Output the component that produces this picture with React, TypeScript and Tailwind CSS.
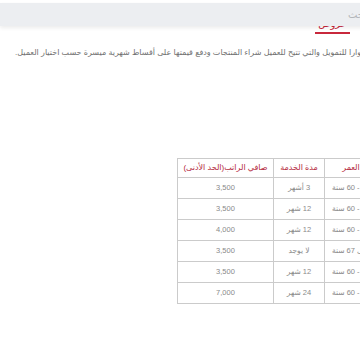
const rows = [
  { age: '21 - 60 سنة', service: '3 أشهر', salary: '3,500' },
  { age: '21 - 60 سنة', service: '12 شهر', salary: '3,500' },
  { age: '21 - 60 سنة', service: '12 شهر', salary: '4,000' },
  { age: 'حتى 67 سنة', service: 'لا يوجد', salary: '3,500' },
  { age: '21 - 60 سنة', service: '12 شهر', salary: '3,500' },
  { age: '21 - 60 سنة', service: '24 شهر', salary: '7,000' },
]

export default function App() {
  return (
    <div className="relative w-[360px] h-[360px] overflow-hidden bg-white font-['Liberation_Sans','DejaVu_Sans',sans-serif]">
      {/* search bar */}
      <div className="relative z-10 pt-[3px]">
        <div className="h-[23px] w-[520px] bg-[#eceef1] shadow-[0_2px_4px_rgba(0,0,0,0.08)] flex items-center">
          <span dir="rtl" className="ml-[348px] text-[10px] text-[#b3b6ba]">ابحث</span>
        </div>
      </div>

      {/* title, mostly under the bar */}
      <div dir="rtl" className="-mt-[4px] ml-[315px] w-[35px] h-[12px] border-b-[2px] border-[#c8283c] text-center text-[10px] leading-[4px] text-[#c8283c] whitespace-nowrap">
        عروض
      </div>

      {/* description */}
      <div className="mt-[12px] w-[560px] pl-[15px]">
        <p dir="rtl" className="text-left whitespace-nowrap text-[8px] leading-[14px] text-[#6f6f6f]">
          خدمة التقسيط من كوارا للتمويل والتي تتيح للعميل شراء المنتجات ودفع قيمتها على أقساط شهرية ميسرة حسب اختيار العميل.
        </p>
      </div>

      {/* table */}
      <div className="mt-[98px] ml-[177px] w-[260px]">
        <table dir="rtl" className="w-[200px] table-fixed border-collapse text-[7.5px] text-[#8a8a8a]">
          <thead>
            <tr className="h-[19px]">
              <th className="w-[53px] border border-[#cbcbcb] font-normal text-[8px] text-[#b4283c] whitespace-nowrap">العمر</th>
              <th className="w-[51px] border border-[#cbcbcb] font-normal text-[8px] text-[#b4283c] whitespace-nowrap">مدة الخدمة</th>
              <th className="w-[96px] border border-[#cbcbcb] font-normal text-[8px] text-[#b4283c] whitespace-nowrap">صافي الراتب(الحد الأدنى)</th>
            </tr>
          </thead>
          <tbody>
            {rows.map((r, i) => (
              <tr key={i} className="h-[21px]">
                <td className="border border-[#cbcbcb] text-center whitespace-nowrap">{r.age}</td>
                <td className="border border-[#cbcbcb] text-center whitespace-nowrap">{r.service}</td>
                <td className="border border-[#cbcbcb] text-center whitespace-nowrap">{r.salary}</td>
              </tr>
            ))}
          </tbody>
        </table>
      </div>
    </div>
  )
}
